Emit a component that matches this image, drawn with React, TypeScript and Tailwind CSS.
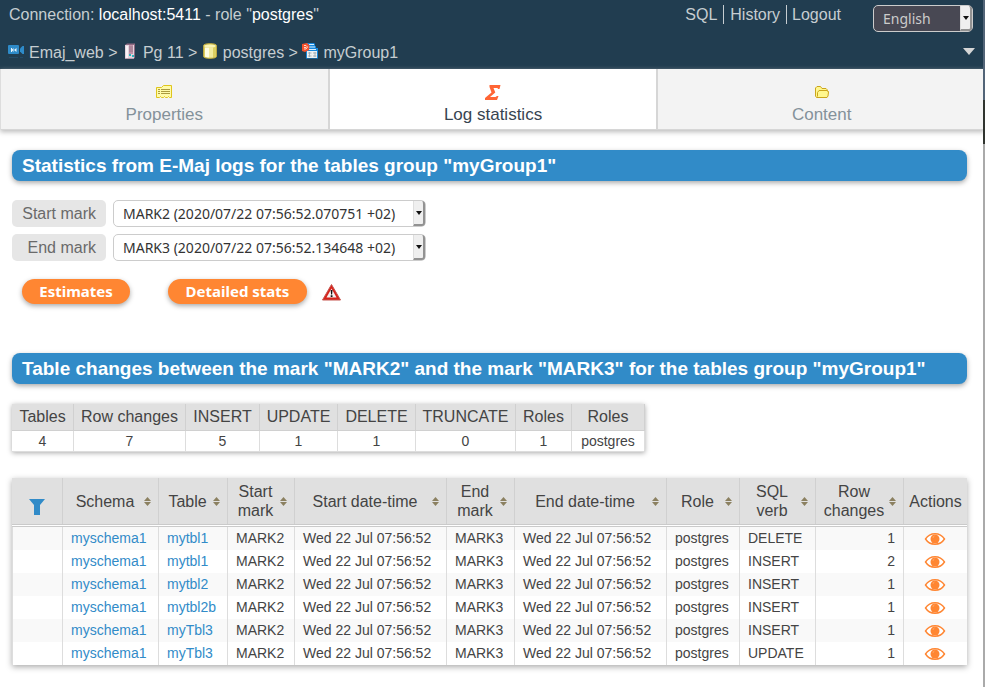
import React from 'react';

const summary = [
  ['Tables', '4', 'w-[62px]'],
  ['Row changes', '7', 'w-[112px]'],
  ['INSERT', '5', 'w-[74px]'],
  ['UPDATE', '1', 'w-[78px]'],
  ['DELETE', '1', 'w-[78px]'],
  ['TRUNCATE', '0', 'w-[100px]'],
  ['Roles', '1', 'w-[56px]'],
  ['Roles', 'postgres', 'w-[73px]'],
];

const columns = [
  { lines: ['Schema'], width: 'w-[96px]' },
  { lines: ['Table'], width: 'w-[69px]' },
  { lines: ['Start', 'mark'], width: 'w-[67px]' },
  { lines: ['Start date-time'], width: 'w-[152px]' },
  { lines: ['End', 'mark'], width: 'w-[68px]' },
  { lines: ['End date-time'], width: 'w-[152px]' },
  { lines: ['Role'], width: 'w-[73px]' },
  { lines: ['SQL', 'verb'], width: 'w-[76px]' },
  { lines: ['Row', 'changes'], width: 'w-[88px]' },
];

const rows = [
  ['mytbl1', 'DELETE', '1'],
  ['mytbl1', 'INSERT', '2'],
  ['mytbl2', 'INSERT', '1'],
  ['mytbl2b', 'INSERT', '1'],
  ['myTbl3', 'INSERT', '1'],
  ['myTbl3', 'UPDATE', '1'],
];

function CameraIcon() {
  return (
    <svg width="17" height="16" viewBox="0 0 17 16" aria-hidden="true">
      <rect x="0" y="2" width="11" height="9" rx="1" fill="#2e8bc9" />
      <path d="M3 5v4h1V7.500l1.500 1.500V5L4 6.500V5zM8.500 5v4L6 7z" fill="#e8f4fc" />
      <path d="M16 3v8h-1.500L12 8.500v-3L14.500 3z" fill="#2e8bc9" />
      <path d="M1 14.500h9M12 14.500h3" stroke="#2b6288" opacity=".4" />
    </svg>
  );
}

function ServerIcon() {
  return (
    <svg width="11" height="17" viewBox="0 0 11 17" aria-hidden="true">
      <path d="M1 2L3 .5h8v14L9.500 16H1z" fill="#8d6a82" />
      <path d="M1 2h9v13.500H1z" fill="#e3d3dd" />
      <path d="M2 3h2v12H2z" fill="#f8f2f6" />
      <path d="M5 2h4v9H5z" fill="#c193a9" />
      <path d="M5 4h4M5 6h4M5 8h4" stroke="#94788b" />
      <path d="M5 11h2v2H5zM8 12h2v2H8z" fill="#2bb5bd" />
    </svg>
  );
}

function DatabaseIcon() {
  return (
    <svg width="14" height="16" viewBox="0 0 14 16" aria-hidden="true">
      <path d="M.5 2.500C.5 0 13.500 0 13.500 2.500v11c0 2.500-13 2.500-13 0z" fill="#dccf62" stroke="#bba740" />
      <path d="M2 4.500h4v10c-1.500 0-3-.3-4-.8z" fill="#fffde2" />
      <path d="M6 4.500h4v10H6z" fill="#f2eb9e" />
      <ellipse cx="7" cy="2.900" rx="5.500" ry="1.500" fill="#f9f3b5" />
    </svg>
  );
}

function GroupIcon() {
  return (
    <svg width="16" height="17" viewBox="0 0 16 17" aria-hidden="true">
      <path d="M5 0h7l1 1v2h1v2h2v10.500H4V8z" fill="#1587dc" />
      <path d="M7 1.500h5M7 4h6M6 6.500h8" stroke="#d9f0ff" />
      <path d="M5 8h10v7H5z" fill="#edf0f2" />
      <path d="M6 10h3.500M11 10h3.500M6 13h3.500M11 13h3.500M7.500 9v5M13 9v5" stroke="#98a2aa" strokeWidth=".8" />
      <path d="M0 1L5 0l2.500 2.500L7 7 3 9 0 8z" fill="#f4512c" />
      <path d="M2 2.500h2L5.500 4 4 6H2M2 4.500h2" stroke="#ffd8cb" fill="none" />
    </svg>
  );
}

function PropertiesIcon() {
  return (
    <svg width="16" height="13" viewBox="0 0 16 13" aria-hidden="true">
      <path d="M.5 2.500h5l2-2h8v12h-2l-1-1-1 1h-2l-1-1-1 1h-2l-1-1-1 1h-3z" fill="#fffbaa" stroke="#dfc51c" />
      <path d="M2 4.500h2M2 6.500h2M2 8.500h2M5 4.500h9M5 6.500h9M5 8.500h9" stroke="#aa9b40" />
    </svg>
  );
}

function SigmaIcon() {
  return (
    <svg width="16" height="16" viewBox="0 0 16 16" aria-hidden="true">
      <path d="M4.500 0h11l-1 4h-1.500l-.5-1H8.500l1.800 4.500L5 12h5.500l1.500-1h1.500l-1.500 4H0v-2l6.500-5.500L4.500 2z" fill="#ff6535" />
    </svg>
  );
}

function FolderIcon() {
  return (
    <svg width="14" height="12" viewBox="0 0 14 12" aria-hidden="true">
      <path d="M1.500 11.500L.5 10V2L2 .5h3.500L7 2.500h4l1 1V5h1l.5 1-.5 4-1 1.500z" fill="#fff78e" stroke="#cba51c" />
      <path d="M2.500 10.500v-4L4 4.500h8.500" fill="none" stroke="#cba51c" />
    </svg>
  );
}

function WarningIcon() {
  return (
    <svg width="19" height="17" viewBox="0 0 19 17" role="img" aria-label="Warning">
      <path d="M9.500.5L18.500 16H.5z" fill="#d6221b" stroke="#c65650" />
      <path d="M9.500 4.500L14.500 13.500h-10z" fill="#f6f0f0" />
      <path d="M8.700 6h1.800l-.4 4.500h-1zM8.700 11.300h1.800v1.700H8.700z" fill="#111" />
    </svg>
  );
}

function SortIcon() {
  return (
    <svg width="7" height="9" viewBox="0 0 7 9" aria-hidden="true" className="shrink-0">
      <path d="M0 4L3.500 0 7 4zM0 5h7L3.500 9z" fill="#8b8060" />
    </svg>
  );
}

function EyeIcon() {
  return (
    <svg width="22" height="14" viewBox="0 0 22 14" aria-hidden="true">
      <path d="M1.500 7c4.500-7 14.500-7 19 0-4.500 7-14.500 7-19 0z" fill="#fff" stroke="#ff8632" strokeWidth="1.400" />
      <circle cx="11" cy="7" r="4.500" fill="#ff8632" />
      <path d="M9 6q0-1.700 1.500-2" fill="none" stroke="#ffb67f" strokeWidth=".6" />
    </svg>
  );
}

function SelectArrow() {
  return (
    <span className="pointer-events-none absolute inset-y-px right-px flex w-3 items-center justify-center rounded-r-[3px] border-r-2 border-b-2 border-l border-[#929292] border-l-[#dedede] bg-[#efefef]">
      <svg width="6" height="4" viewBox="0 0 6 4" aria-hidden="true"><path d="M0 0h6L3 4z" fill="#111" /></svg>
    </span>
  );
}

function MarkField({ id, label, value }: { id: string; label: string; value: string }) {
  return (
    <div className="flex items-center gap-[7px]">
      <label htmlFor={id} className="h-[27px] w-[94px] rounded-[5px] bg-[#e6e6e6] pr-[10px] text-right text-base leading-[27px] text-[#6a6a6a]">{label}</label>
      <div className="relative">
        <select id={id} className="block h-[27px] w-[313px] appearance-none rounded-[5px] border border-[#cccccc] bg-white pr-3 pl-[9px] font-['Noto_Sans',sans-serif] text-sm text-[#333]">
          <option>{value}</option>
        </select>
        <SelectArrow />
      </div>
    </div>
  );
}

function Heading({ children }: { children: React.ReactNode }) {
  return <h2 className="h-[31px] rounded-lg bg-[#318bc8] px-[10px] text-[19px] leading-[31px] font-bold whitespace-nowrap text-white shadow-[0_2px_5px_#aaa]">{children}</h2>;
}

const tabClass = 'flex h-[61px] flex-1 flex-col items-center border-b border-[#d6d6d6] text-[17px] leading-5';
const buttonClass = "h-[25px] rounded-full bg-[#ff8632] font-['Noto_Sans',sans-serif] text-[15px] leading-[25px] font-bold text-white shadow-[0_2px_5px_#aaa]";
const cellClass = 'border-r border-[#ddd] p-0 pl-2';

export default function App() {
  return (
    <div className="flex min-h-screen bg-white font-['Liberation_Sans',Arial,sans-serif] text-[#444]">
      <div className="min-w-0 flex-1 overflow-x-clip">
        <header className="h-[69px] bg-[#213d50] text-base text-[#c6cdd1]">
          <div className="flex h-[38px] justify-between pr-[10px] pl-[9px]">
            <p className="pt-[5px] leading-[19px]">Connection: <span className="text-white">localhost:5411</span> - role "<span className="text-white">postgres</span>"</p>
            <div className="flex items-start pt-[5px]">
              <nav className="mr-8 flex h-[19px] leading-[19px]">
                <a href="#sql" className="border-r border-[#c6cdd1] pr-[6px]">SQL</a>
                <a href="#history" className="border-r border-[#c6cdd1] px-[6px]">History</a>
                <a href="#logout" className="pl-[5px]">Logout</a>
              </nav>
              <div className="relative">
                <select aria-label="Language" className="block h-[27px] w-[100px] appearance-none rounded-[5px] border border-[#cccccc] bg-[#484853] pr-4 pl-[9px] font-['Noto_Sans',sans-serif] text-sm text-[#cccccc]"><option>English</option></select>
                <SelectArrow />
              </div>
            </div>
          </div>
          <div className="flex h-[30px] items-center justify-between px-2">
            <nav aria-label="Breadcrumb" className="flex items-center whitespace-pre [&_svg]:mb-1">
              <CameraIcon /><a href="#home" className="ml-1">Emaj_web</a><span className="mr-[2px]"> &gt; </span>
              <ServerIcon /><a href="#server" className="ml-2">Pg 11</a><span className="mr-px"> &gt; </span>
              <DatabaseIcon /><a href="#database" className="ml-[6px]">postgres</a><span> &gt; </span>
              <GroupIcon /><a href="#group" className="ml-[5px]">myGroup1</a>
            </nav>
            <button aria-label="Show more" className="pb-1"><svg width="12" height="7" viewBox="0 0 12 7"><path d="M0 0h12L6 7z" fill="#d6d6d6" /></svg></button>
          </div>
        </header>

        <nav className="-mr-[2px] flex border-l border-[#ddd] shadow-[0_2px_5px_#bbb]">
          <a href="#properties" className={`${tabClass} border-r-2 bg-[#f3f3f3] text-[#84919a]`}><span className="flex h-9 items-end pb-[7px]"><PropertiesIcon /></span>Properties</a>
          <a href="#statistics" aria-current="page" className={`${tabClass} bg-white text-[#374451]`}><span className="flex h-9 items-end pb-1"><SigmaIcon /></span>Log statistics</a>
          <a href="#content" className={`${tabClass} border-l-2 bg-[#f3f3f3] text-[#84919a]`}><span className="flex h-9 items-end pb-[7px]"><FolderIcon /></span>Content</a>
        </nav>

        <main className="pt-5 pr-4 pb-5 pl-3">
          <Heading>Statistics from E-Maj logs for the tables group "myGroup1"</Heading>
          <form className="mt-[19px] flex flex-col gap-[7px]" onSubmit={(e) => e.preventDefault()}>
            <MarkField id="start" label="Start mark" value="MARK2 (2020/07/22 07:56:52.070751 +02)" />
            <MarkField id="end" label="End mark" value="MARK3 (2020/07/22 07:56:52.134648 +02)" />
            <div className="mt-[11px] flex items-center pl-[10px]">
              <button className={`${buttonClass} w-[108px]`}>Estimates</button>
              <button className={`${buttonClass} mr-[15px] ml-[38px] w-[139px]`}>Detailed stats</button>
              <span className="pt-[2px]"><WarningIcon /></span>
            </div>
          </form>
          <div className="mt-[49px]"><Heading>Table changes between the mark "MARK2" and the mark "MARK3" for the tables group "myGroup1"</Heading></div>

          <table className="mt-5 w-[633px] table-fixed border-separate border-spacing-0 text-center shadow-[0_1px_5px_#aaa]">
            <thead>
              <tr className="h-[27px] bg-[#e0e0e0] text-base leading-5">
                {summary.map(([name, , width], i) => <th key={i} className={`${width} border-r border-b border-[#d0d0d0] p-0 font-normal whitespace-nowrap`}>{name}</th>)}
              </tr>
            </thead>
            <tbody>
              <tr className="h-[21px] text-sm leading-5">
                {summary.map(([, value], i) => <td key={i} className="border-r border-b border-[#ddd] p-0">{value}</td>)}
              </tr>
            </tbody>
          </table>

          <table className="mt-[26px] w-full table-fixed border-separate border-spacing-0 shadow-[0_2px_6px_#aaa]">
            <thead>
              <tr className="h-[46px] bg-[#e0e0e0] text-base leading-[19px]">
                <th className="w-[51px] border-r border-[#d0d0d0] p-0"><button aria-label="Filter" className="block pt-3 pl-[17px]"><svg width="16" height="16" viewBox="0 0 16 16"><path d="M0 0h16l-5 6v10H5V6z" fill="#318bc8" /></svg></button></th>
                {columns.map((c) => (
                  <th key={c.lines.join(' ')} className={`${c.width} border-r border-[#d0d0d0] py-0 pr-[7px] pl-[3px] font-normal`}>
                    <div className="flex items-center">
                      <span className="flex-1 whitespace-nowrap">{c.lines.map((line) => <span key={line} className="block">{line}</span>)}</span>
                      <SortIcon />
                    </div>
                  </th>
                ))}
                <th className="w-[63px] p-0 font-normal">Actions</th>
              </tr>
              <tr className="h-[3px]" aria-hidden="true"><td colSpan={11} className="border-y border-[#cacaca] bg-white p-0"></td></tr>
            </thead>
            <tbody className="text-sm leading-[23px] whitespace-nowrap">
              {rows.map(([table, verb, changes], i) => (
                <tr key={i} className="h-[23px] odd:bg-[#f9f9f9]">
                  <td className="border-x border-[#ddd] p-0"></td>
                  <td className={`${cellClass} text-[#318bc8]`}><a href="#schema">myschema1</a></td>
                  <td className={`${cellClass} text-[#318bc8]`}><a href="#table">{table}</a></td>
                  <td className={cellClass}>MARK2</td>
                  <td className={cellClass}>Wed 22 Jul 07:56:52</td>
                  <td className={cellClass}>MARK3</td>
                  <td className={cellClass}>Wed 22 Jul 07:56:52</td>
                  <td className={cellClass}>postgres</td>
                  <td className={cellClass}>{verb}</td>
                  <td className="border-r border-[#ddd] p-0 pr-2 text-right">{changes}</td>
                  <td className="p-0 pr-[2px]"><button aria-label={`View ${table}`} className="mx-auto block pt-px"><EyeIcon /></button></td>
                </tr>
              ))}
            </tbody>
          </table>
        </main>
      </div>
      <div className="flex w-[2px] shrink-0 flex-col bg-[#aaa]"><div className="h-[100px] bg-[#526477]"></div><div className="h-[44px] bg-[#30342f]"></div></div>
    </div>
  );
}
